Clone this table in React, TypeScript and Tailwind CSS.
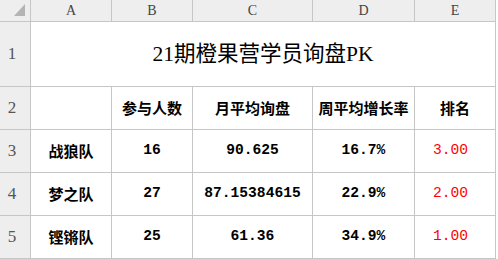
import React from "react";

const line = "border-r border-b border-[#c6c6c6]";
const cjk = "font-['Noto_Sans_CJK_SC',sans-serif]";
const mono = "font-['Liberation_Mono','Noto_Sans_CJK_SC',monospace]";
const serif = "font-['Liberation_Serif',serif]";

const teams = [
  { name: "战狼队", count: "16", month: "90.625", week: "16.7%", rank: "3.00" },
  { name: "梦之队", count: "27", month: "87.15384615", week: "22.9%", rank: "2.00" },
  { name: "铿锵队", count: "25", month: "61.36", week: "34.9%", rank: "1.00" },
];

const ColHead = ({ label }: { label: string }) => (
  <div className={`${line} ${serif} bg-[#eeeeee] flex items-center justify-center text-[14px] text-[#444]`}>
    {label}
  </div>
);

const RowHead = ({ n }: { n: number }) => (
  <div className={`${line} ${serif} bg-[#eeeeee] flex items-center justify-center pr-[6px] text-[17px] text-[#555]`}>
    {n}
  </div>
);

const Cell = ({ children, className = "" }: any) => (
  <div className={`${line} flex items-center justify-center ${className}`}>{children}</div>
);

export default function App() {
  return (
    <div className="w-[498px] h-[259px] bg-white overflow-hidden">
      <div className="grid grid-cols-[31px_81px_81px_120px_102px_81px] grid-rows-[22px_65px_43px_43px_43px_43px] w-[496px]">
        <div className={`${line} bg-[#eeeeee] pl-[14px] pt-[4px]`}>
          <svg width="11" height="12" viewBox="0 0 11 12">
            <polygon points="11,0 11,12 0,12" fill="#b4b4b4" />
          </svg>
        </div>
        {["A", "B", "C", "D", "E"].map((c) => (
          <ColHead key={c} label={c} />
        ))}

        <RowHead n={1} />
        <div
          className={`${line} col-span-5 flex items-center justify-center text-[21.5px] text-black font-['Liberation_Serif','Noto_Sans_CJK_SC',serif]`}
        >
          21期橙果营学员询盘PK
        </div>

        <RowHead n={2} />
        <Cell />
        {["参与人数", "月平均询盘", "周平均增长率", "排名"].map((h) => (
          <Cell key={h} className={`${cjk} font-bold text-[15px] text-black`}>
            {h}
          </Cell>
        ))}

        {teams.map((t, i) => (
          <React.Fragment key={t.name}>
            <RowHead n={i + 3} />
            <Cell className={`${cjk} font-bold text-[15px] text-black`}>{t.name}</Cell>
            <Cell className={`${mono} font-bold text-[14.6px] text-black`}>{t.count}</Cell>
            <Cell className={`${mono} font-bold text-[14.6px] text-black`}>{t.month}</Cell>
            <Cell className={`${mono} font-bold text-[14.6px] text-black`}>{t.week}</Cell>
            <Cell className={`${mono} text-[14.6px] text-[#ff0000] pr-[9px]`}>{t.rank}</Cell>
          </React.Fragment>
        ))}
      </div>
    </div>
  );
}
